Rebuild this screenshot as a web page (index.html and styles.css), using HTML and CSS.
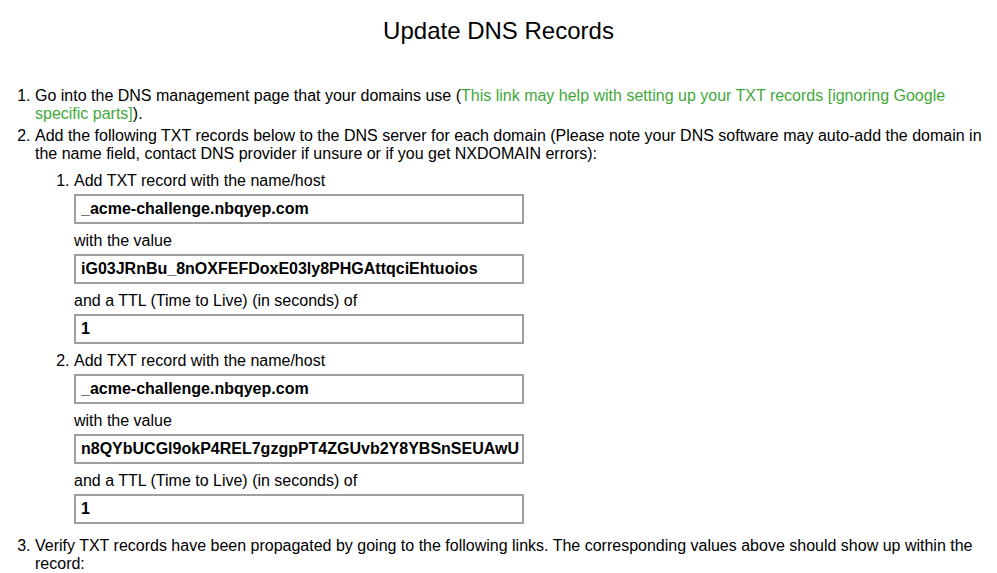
FILE: index.html
```html
<!doctype html>
<html lang="en">
<head>
  <meta charset="UTF-8" />
  <title>Update DNS Records</title>
  <link rel="stylesheet" href="styles.css">
</head>
<body>
  <h1>Update DNS Records</h1>

  <ol class="steps">
    <li>Go into the DNS management page that your domains use (<a href="#">This link may help with setting up your TXT records [ignoring Google specific parts]</a>).</li>
    <li>Add the following TXT records below to the DNS server for each domain (Please note your DNS software may auto-add the domain in the name field, contact DNS provider if unsure or if you get NXDOMAIN errors):
      <ol class="records">
        <li>
          <div class="label">Add TXT record with the name/host</div>
          <input type="text" class="field" value="_acme-challenge.nbqyep.com" readonly />
          <div class="label">with the value</div>
          <input type="text" class="field" value="iG03JRnBu_8nOXFEFDoxE03ly8PHGAttqciEhtuoios" readonly />
          <div class="label">and a TTL (Time to Live) (in seconds) of</div>
          <input type="text" class="field" value="1" readonly />
        </li>
        <li>
          <div class="label">Add TXT record with the name/host</div>
          <input type="text" class="field" value="_acme-challenge.nbqyep.com" readonly />
          <div class="label">with the value</div>
          <input type="text" class="field" value="n8QYbUCGl9okP4REL7gzgpPT4ZGUvb2Y8YBSnSEUAwU" readonly />
          <div class="label">and a TTL (Time to Live) (in seconds) of</div>
          <input type="text" class="field" value="1" readonly />
        </li>
      </ol>
    </li>
    <li>Verify TXT records have been propagated by going to the following links. The corresponding values above should show up within the record:</li>
  </ol>
</body>
</html>
```

FILE: styles.css
```css
body {
  margin: 8px;
  font-family: "Liberation Sans", Arial, sans-serif;
  font-size: 16px;
  line-height: 18px;
  color: #000;
  background: #fff;
}
h1 {
  font-size: 24px;
  font-weight: normal;
  line-height: 28px;
  text-align: center;
  margin: 9px 0 0 0;
}
a {
  color: #3fa83b;
  text-decoration: none;
}
.steps {
  margin: 42px 0 0 0;
  padding-left: 27px;
}
.steps > li {
  margin-bottom: 4px;
}
.records {
  margin: 9px 0 13px 0;
  padding-left: 39px;
}
.field {
  display: block;
  box-sizing: border-box;
  width: 450px;
  height: 30px;
  margin: 4px 0 8px 0;
  padding: 0 1px 0 5px;
  border: 2px solid #a0a0a0;
  font-family: "Liberation Sans", Arial, sans-serif;
  font-size: 16px;
  font-weight: bold;
  color: #000;
  outline: none;
}
```
